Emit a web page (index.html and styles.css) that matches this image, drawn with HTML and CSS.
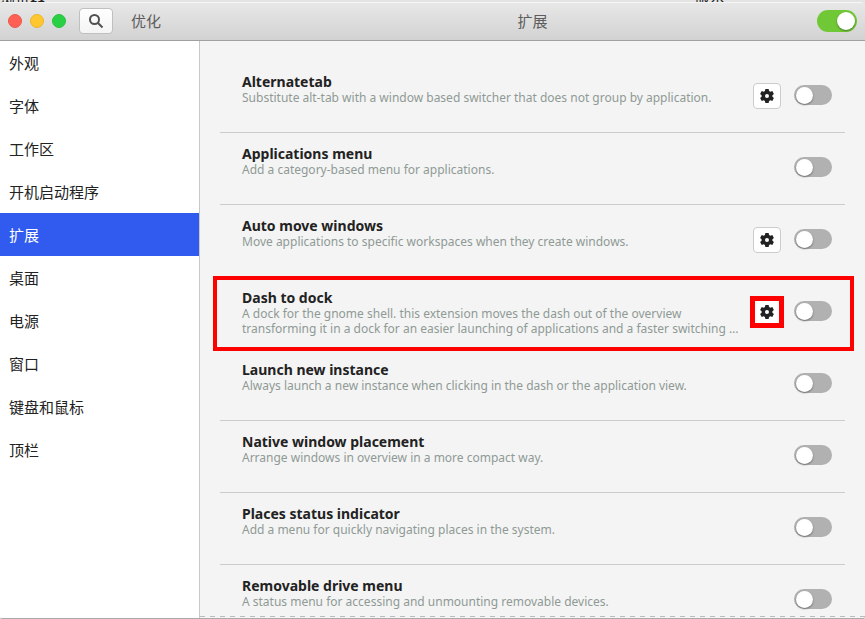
FILE: index.html
```html
<!DOCTYPE html>
<html lang="zh-CN">
<head>
<meta charset="utf-8">
<title>优化</title>
<link rel="stylesheet" href="styles.css">
</head>
<body>
<svg class="defs" aria-hidden="true">
  <symbol id="gear" viewBox="0 0 16 16">
    <path fill-rule="evenodd" d="M6.400 1h3.200l.5 2.100 1.200.7 2-.7 1.600 2.800-1.500 1.400v1.400l1.500 1.400-1.600 2.800-2-.7-1.200.7-.5 2.100H6.400l-.5-2.100-1.200-.7-2 .7-1.600-2.800 1.500-1.400V7.300L1.100 5.900l1.600-2.800 2 .7 1.200-.7zM8 6a2 2 0 1 0 0 4 2 2 0 0 0 0-4z"/>
  </symbol>
</svg>
<div class="backdrop"><span>浏览器</span><span class="backdrop-right">版本</span></div>
<div class="window">
  <header class="titlebar">
    <div class="titlebar-left">
      <div class="lights">
        <button class="light close" aria-label="关闭"></button>
        <button class="light minimize" aria-label="最小化"></button>
        <button class="light maximize" aria-label="最大化"></button>
      </div>
      <button class="search" aria-label="搜索">
        <svg viewBox="0 0 16 16" width="16" height="16"><circle cx="6.500" cy="6.500" r="4.500"/><path d="M10 10l4.500 4.500"/></svg>
      </button>
      <span class="app-name">优化</span>
    </div>
    <h1 class="page-name">扩展</h1>
    <input class="switch master" type="checkbox" role="switch" aria-label="扩展" checked>
  </header>
  <div class="body">
    <nav class="sidebar">
      <a href="#">外观</a>
      <a href="#">字体</a>
      <a href="#">工作区</a>
      <a href="#">开机启动程序</a>
      <a href="#" class="active" aria-current="page">扩展</a>
      <a href="#">桌面</a>
      <a href="#">电源</a>
      <a href="#">窗口</a>
      <a href="#">键盘和鼠标</a>
      <a href="#">顶栏</a>
    </nav>
    <main class="content">
      <ul class="list">
        <li class="row">
          <label class="text" for="e1"><span class="name">Alternatetab</span><span class="desc">Substitute alt-tab with a window based switcher that does not group by application.</span></label>
          <button class="gear" aria-label="Alternatetab"><svg width="16" height="16"><use href="#gear"/></svg></button>
          <input class="switch" type="checkbox" role="switch" id="e1">
        </li>
        <li class="row">
          <label class="text" for="e2"><span class="name">Applications menu</span><span class="desc">Add a category-based menu for applications.</span></label>
          <input class="switch" type="checkbox" role="switch" id="e2">
        </li>
        <li class="row">
          <label class="text" for="e3"><span class="name">Auto move windows</span><span class="desc">Move applications to specific workspaces when they create windows.</span></label>
          <button class="gear" aria-label="Auto move windows"><svg width="16" height="16"><use href="#gear"/></svg></button>
          <input class="switch" type="checkbox" role="switch" id="e3">
        </li>
        <li class="row marked">
          <label class="text" for="e4"><span class="name">Dash to dock</span><span class="desc">A dock for the gnome shell. this extension moves the dash out of the overview<br>transforming it in a dock for an easier launching of applications and a faster switching …</span></label>
          <button class="gear" aria-label="Dash to dock"><svg width="16" height="16"><use href="#gear"/></svg></button>
          <input class="switch" type="checkbox" role="switch" id="e4">
        </li>
        <li class="row">
          <label class="text" for="e5"><span class="name">Launch new instance</span><span class="desc">Always launch a new instance when clicking in the dash or the application view.</span></label>
          <input class="switch" type="checkbox" role="switch" id="e5">
        </li>
        <li class="row">
          <label class="text" for="e6"><span class="name">Native window placement</span><span class="desc">Arrange windows in overview in a more compact way.</span></label>
          <input class="switch" type="checkbox" role="switch" id="e6">
        </li>
        <li class="row">
          <label class="text" for="e7"><span class="name">Places status indicator</span><span class="desc">Add a menu for quickly navigating places in the system.</span></label>
          <input class="switch" type="checkbox" role="switch" id="e7">
        </li>
        <li class="row">
          <label class="text" for="e8"><span class="name">Removable drive menu</span><span class="desc">A status menu for accessing and unmounting removable devices.</span></label>
          <input class="switch" type="checkbox" role="switch" id="e8">
        </li>
      </ul>
    </main>
  </div>
</div>
</body>
</html>
```
FILE: styles.css
```css
* { box-sizing: border-box; }

body {
  margin: 0;
  height: 100vh;
  display: flex;
  flex-direction: column;
  overflow: hidden;
  background: #e4e4e4;
  color: #222;
  font: 15px/20px "Noto Sans", "Noto Sans CJK SC", sans-serif;
}

button { padding: 0; font: inherit; }

.defs { position: absolute; width: 0; height: 0; }

.backdrop {
  display: flex;
  align-items: flex-end;
  justify-content: space-between;
  height: 2px;
  overflow: hidden;
  font-size: 15px;
  line-height: 8px;
}

.backdrop-right { margin-right: 140px; }

.window {
  flex: 1;
  min-height: 0;
  display: flex;
  flex-direction: column;
  border-bottom: 1px solid #aaa;
  border-radius: 5px 5px 2px 2px;
  overflow: hidden;
  background: #f4f4f4;
}

.titlebar {
  display: grid;
  grid-template-columns: 192px 1fr auto;
  align-items: center;
  height: 39px;
  flex: none;
  padding: 0 8px;
  border-bottom: 1px solid #a0a0a0;
  background: linear-gradient(#e8e8e8, #d2d2d2);
  box-shadow: inset 0 1px #f6f6f6;
  color: #5c5c5c;
}

.titlebar-left { display: flex; align-items: center; }

.lights { display: flex; gap: 8px; }

.light {
  width: 14px;
  height: 14px;
  border: 1px solid;
  border-radius: 50%;
}

.close { background: #ff6055; border-color: #ee564c; }
.minimize { background: #ffc72e; border-color: #eab52a; }
.maximize { background: #2ad043; border-color: #27c23e; }

.search {
  display: grid;
  place-items: center;
  width: 34px;
  height: 26px;
  margin: 0 18px 0 13px;
  border: 1px solid #c0c0c0;
  border-radius: 4px;
  background: linear-gradient(#fff, #f4f4f4);
}

.search svg { fill: none; stroke: #505050; stroke-width: 2; }

.page-name {
  grid-area: 1 / 2 / 2 / 4;
  margin: 0;
  padding-left: 8px;
  font-size: 15px;
  font-weight: 400;
  text-align: center;
}

.switch {
  appearance: none;
  flex: none;
  display: flex;
  align-items: center;
  width: 38px;
  height: 20px;
  margin: 0;
  padding: 0 2px;
  border-radius: 11px;
  background: #b1b1b1;
}

.switch::before {
  content: "";
  width: 17px;
  height: 17px;
  border-radius: 50%;
  background: #fff;
  box-shadow: 0 1px 2px rgba(0, 0, 0, 0.4);
}

.switch:checked { justify-content: flex-end; background: #71c837; }

.master { grid-area: 1 / 3; width: 40px; height: 22px; }
.master::before { width: 18px; height: 18px; }

.body { flex: 1; min-height: 0; display: flex; }

.sidebar {
  flex: none;
  width: 200px;
  border-right: 1px solid #c8c8c8;
  background: #fff;
}

.sidebar a {
  display: block;
  padding: 12px 9px 11px;
  color: inherit;
  text-decoration: none;
}

.sidebar .active { background: #315bef; color: #fff; }

.content {
  flex: 1;
  min-width: 0;
  margin-bottom: 1px;
  padding: 20px;
  overflow: hidden;
  background: repeating-linear-gradient(90deg, #bbb 0 5px, transparent 5px 10px) bottom / 100% 1px no-repeat;
}

.list { margin: 0; padding: 0; list-style: none; }

.row {
  position: relative;
  display: flex;
  align-items: center;
  height: 72px;
  padding: 0 13px 3px 22px;
  border-bottom: 1px solid #ccc;
}

.text {
  flex: 1;
  min-width: 0;
  align-self: flex-start;
  padding-top: 13px;
  white-space: nowrap;
}

.name { display: block; font-size: 14px; line-height: 16px; font-weight: 700; }
.desc { display: block; font-size: 12px; line-height: 15px; color: #8f9a94; }

.gear {
  display: grid;
  place-items: center;
  width: 28px;
  height: 26px;
  margin: 2px 13px 0 0;
  border: 1px solid #ccc;
  border-radius: 4px;
  background: #fff;
  fill: #222;
}

.marked::after {
  content: "";
  position: absolute;
  inset: -1px -9px -3px -7px;
  border: 4px solid #f00;
  pointer-events: none;
}

.marked .gear { outline: 5px solid #f00; outline-offset: -2px; border-radius: 0; }
```
